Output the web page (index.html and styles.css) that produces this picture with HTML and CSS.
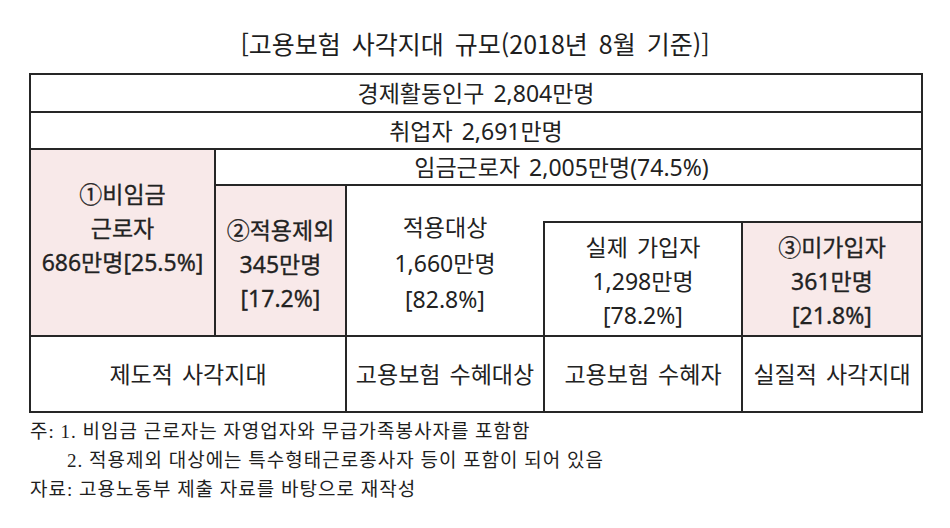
FILE: index.html
```html
<!DOCTYPE html>
<html lang="ko">
<head>
<meta charset="utf-8">
<title>고용보험 사각지대 규모</title>
<link rel="stylesheet" href="styles.css">
</head>
<body>
<div class="page">
  <h1 class="title">[고용보험 사각지대 규모(2018년 8월 기준)]</h1>
  <div class="grid">
    <div class="cell c-full">경제활동인구 2,804만명</div>
    <div class="cell c-full r2">취업자 2,691만명</div>
    <div class="cell pink bold c-nonwage"><span>①비임금</span><span>근로자</span><span>686만명[25.5%]</span></div>
    <div class="cell c-wage">임금근로자 2,005만명(74.5%)</div>
    <div class="cell pink bold c-excl"><span>②적용제외</span><span>345만명</span><span>[17.2%]</span></div>
    <div class="cell c-target no-right"><span>적용대상</span><span>1,660만명</span><span>[82.8%]</span></div>
    <div class="cell c-gap"></div>
    <div class="cell c-joined with-left"><span>실제 가입자</span><span>1,298만명</span><span>[78.2%]</span></div>
    <div class="cell pink bold c-unjoined"><span>③미가입자</span><span>361만명</span><span>[21.8%]</span></div>
    <div class="cell b-inst">제도적 사각지대</div>
    <div class="cell b-target no-right">고용보험 수혜대상</div>
    <div class="cell b-recv with-left">고용보험 수혜자</div>
    <div class="cell b-real">실질적 사각지대</div>
  </div>
  <div class="notes">
    <p>주: 1. 비임금 근로자는 자영업자와 무급가족봉사자를 포함함</p>
    <p class="indent">2. 적용제외 대상에는 특수형태근로종사자 등이 포함이 되어 있음</p>
    <p>자료: 고용노동부 제출 자료를 바탕으로 재작성</p>
  </div>
</div>
</body>
</html>
```

FILE: styles.css
```css
html, body {
  margin: 0;
  padding: 0;
  background: #ffffff;
}

body {
  width: 950px;
  height: 528px;
  overflow: hidden;
  color: #222222;
  font-family: "Noto Sans", "Noto Sans CJK KR", sans-serif;
}

.page {
  display: flex;
  flex-direction: column;
}

.title {
  margin: 28px 0 0 0;
  height: 30px;
  line-height: 30px;
  font-size: 25px;
  font-weight: 400;
  text-align: center;
  word-spacing: 4px;
  color: #1e1e1e;
  font-family: "Noto Sans CJK KR", sans-serif;
}

.grid {
  margin: 15px 0 0 29px;
  width: 892px;
  display: grid;
  grid-template-columns: 185px 131px 196px 200px 180px;
  grid-template-rows: 38px 37px 36px 37px 114px 76px;
  border-top: 2px solid #262626;
  border-left: 2px solid #262626;
  font-size: 23px;
  word-spacing: 3px;
}

.cell {
  box-sizing: border-box;
  border-right: 2px solid #262626;
  border-bottom: 2px solid #262626;
  display: flex;
  flex-direction: column;
  justify-content: center;
  align-items: center;
  text-align: center;
  line-height: 34px;
  background: #ffffff;
  white-space: nowrap;
}

.pink {
  background: #f8e9e9;
}

.bold {
  font-weight: 400;
  -webkit-text-stroke: 0.3px #222222;
}

.no-right {
  border-right: none;
}

.with-left {
  border-left: 2px solid #262626;
}

.c-full {
  grid-column: 1 / 6;
  grid-row: 1;
}

.c-full.r2 {
  grid-row: 2;
}

.c-nonwage {
  grid-column: 1;
  grid-row: 3 / 6;
  padding-bottom: 30px;
}

.c-wage {
  grid-column: 2 / 6;
  grid-row: 3;
  padding-right: 14px;
}

.c-excl {
  grid-column: 2;
  grid-row: 4 / 6;
  padding-top: 6px;
}

.c-target {
  grid-column: 3;
  grid-row: 4 / 6;
  line-height: 36px;
  padding-top: 4px;
}

.c-gap {
  grid-column: 4 / 6;
  grid-row: 4;
}

.c-joined {
  grid-column: 4;
  grid-row: 5;
  padding-top: 4px;
}

.c-unjoined {
  grid-column: 5;
  grid-row: 5;
  padding-top: 4px;
}

.b-inst {
  grid-column: 1 / 3;
  grid-row: 6;
}

.b-target {
  grid-column: 3;
  grid-row: 6;
}

.b-recv {
  grid-column: 4;
  grid-row: 6;
}

.b-real {
  grid-column: 5;
  grid-row: 6;
}

.notes {
  margin: 4px 0 0 30px;
  font-family: "Liberation Serif", "Noto Sans CJK KR", serif;
  font-size: 19px;
  letter-spacing: 1px;
  color: #1e1e1e;
}

.notes p {
  margin: 0;
  line-height: 29px;
  white-space: nowrap;
}

.notes .indent {
  padding-left: 37px;
}
```
